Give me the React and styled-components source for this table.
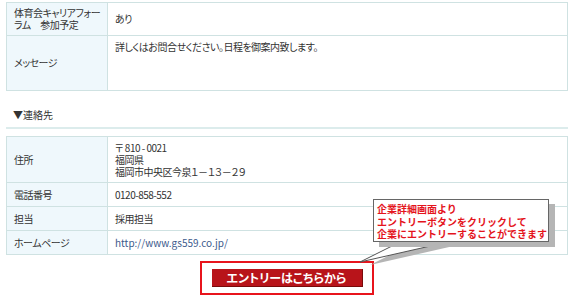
import React from 'react'
import styled, { createGlobalStyle } from 'styled-components'

const GlobalStyle = createGlobalStyle`
  body {
    margin: 0;
    background: #fff;
    font-family: 'Noto Sans CJK JP', 'Noto Sans', sans-serif;
    color: #333;
  }
`

const detailRows = [
  { label: ['体育会キャリアフォー', 'ラム\u3000参加予定'], value: ['あり'], height: 33 },
  { label: ['メッセージ'], value: ['詳しくはお問合せください。日程を御案内致します。'], height: 55, top: true },
]

const contactRows = [
  { label: ['住所'], value: ['〒 810 - 0021', '福岡県', '福岡市中央区今泉１－１３－２９'], height: 46 },
  { label: ['電話番号'], value: ['0120-858-552'], height: 24 },
  { label: ['担当'], value: ['採用担当'], height: 24 },
  { label: ['ホームページ'], value: ['http://www.gs559.co.jp/'], height: 24, link: true },
]

export default function App() {
  return (
    <Page>
      <GlobalStyle />
      <InfoTable rows={detailRows} />
      <SectionTitle>▼連絡先</SectionTitle>
      <InfoTable rows={contactRows} />
      <EntryArea>
        <EntryFrame>
          <EntryButton>エントリーはこちらから</EntryButton>
        </EntryFrame>
      </EntryArea>

      <Tail width='100' height='30' viewBox='0 0 100 30'>
        <polygon points='45,0 93,0 5,20' fill='#b5b5b5' transform='translate(5,3)' />
        <polygon points='40,0 88,0 0,20' fill='#fff' />
        <polyline points='40,0 0,20 88,0' fill='none' stroke='#555' strokeWidth='1' />
      </Tail>
      <Callout>
        企業詳細画面より
        <br />
        エントリーボタンをクリックして
        <br />
        企業にエントリーすることができます
      </Callout>
    </Page>
  )
}

function InfoTable({ rows }) {
  return (
    <Table>
      <tbody>
        {rows.map((row) => (
          <tr key={row.label.join('')} style={{ height: row.height }}>
            <Label>
              {row.label.map((line) => (
                <Line key={line}>{line}</Line>
              ))}
            </Label>
            <Value $top={row.top}>
              {row.value.map((line) =>
                row.link ? (
                  <Link key={line} href='#'>
                    {line}
                  </Link>
                ) : (
                  <Line key={line}>{line}</Line>
                )
              )}
            </Value>
          </tr>
        ))}
      </tbody>
    </Table>
  )
}

const Page = styled.div`
  position: relative;
  width: 575px;
  height: 300px;
  padding: 2px 7px 0 6px;
  box-sizing: border-box;
  overflow: hidden;
`

const Table = styled.table`
  width: 562px;
  border-collapse: collapse;
  table-layout: fixed;
  font-size: 10px;
  font-feature-settings: 'palt';
  letter-spacing: -0.5px;

  td {
    border: 1px solid #cfe2e2;
    padding: 0 7px;
  }
`

const Line = styled.div`
  height: 12px;
  line-height: 12px;
  white-space: nowrap;
`

const Label = styled.td`
  width: 86px;
  background: #eff8fc;
  vertical-align: middle;
`

const Value = styled.td`
  vertical-align: ${(p) => (p.$top ? 'top' : 'middle')};
  padding-top: ${(p) => (p.$top ? '5px' : '0')} !important;
`

const Link = styled.a`
  color: #3d5a8c;
  text-decoration: none;
  letter-spacing: 0;
`

const SectionTitle = styled.div`
  margin-top: 18px;
  padding: 0 7px 6px;
  font-size: 10px;
  line-height: 12px;
  font-feature-settings: 'palt';
  border-bottom: 2px solid #dcecec;
  margin-bottom: 7px;
`

const EntryArea = styled.div`
  display: flex;
  justify-content: center;
  padding-top: 6px;
`

const EntryFrame = styled.div`
  width: 170px;
  height: 24px;
  border: 2px solid #e8141c;
  display: flex;
  justify-content: center;
  padding-top: 6px;
`

const EntryButton = styled.div`
  width: 151px;
  height: 18px;
  background: #b8141a;
  color: #fff;
  font-weight: bold;
  font-size: 12px;
  line-height: 18px;
  text-align: center;
  font-feature-settings: 'palt';
  border-right: 1px solid #7a0a0a;
  border-bottom: 1px solid #7a0a0a;
  box-sizing: border-box;
`

const Callout = styled.div`
  position: absolute;
  left: 373px;
  top: 199px;
  width: 176px;
  height: 43px;
  box-sizing: border-box;
  padding: 3px 3px;
  background: #fff;
  border: 1px solid #666;
  box-shadow: 6px 5px 0 #b5b5b5;
  color: #e4141c;
  font-weight: bold;
  font-size: 10px;
  line-height: 12.5px;
  white-space: nowrap;
`

const Tail = styled.svg`
  position: absolute;
  left: 360px;
  top: 242px;
  overflow: visible;
`
